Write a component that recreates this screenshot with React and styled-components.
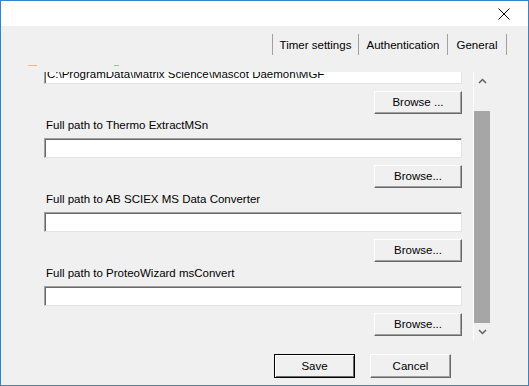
import React from 'react';
import styled, { createGlobalStyle } from 'styled-components';

const GlobalStyle = createGlobalStyle`
  html, body {
    margin: 0;
    padding: 0;
    background: #ffffff;
  }
  body {
    font-family: "Liberation Sans", Arial, sans-serif;
    font-size: 11px;
    color: #000000;
  }
`;

const tabs = [
  { label: 'Timer settings', width: 86 },
  { label: 'Authentication', width: 89 },
  { label: 'General', width: 59 },
];

const fields = [
  { label: 'Full path to Thermo ExtractMSn', button: 'Browse...' },
  { label: 'Full path to AB SCIEX MS Data Converter', button: 'Browse...' },
  { label: 'Full path to ProteoWizard msConvert', button: 'Browse...' },
];

export default function App() {
  return (
    <>
      <GlobalStyle />
      <Window>
        <TitleBar>
          <CloseButton>
            <svg width="12" height="12" viewBox="0 0 12 12">
              <path d="M0.5 0.5 L11.5 11.5 M11.5 0.5 L0.5 11.5" stroke="#000" strokeWidth="1" />
            </svg>
          </CloseButton>
        </TitleBar>
        <Body>
          <TabBar>
            <Separator />
            {tabs.map((t) => (
              <React.Fragment key={t.label}>
                <Tab $width={t.width}>{t.label}</Tab>
                <Separator />
              </React.Fragment>
            ))}
          </TabBar>
          <Marks>
            <Mark $color="#f0b98a" $width={9} />
            <Mark $color="#8fcb8f" $width={5} $gap={77} />
          </Marks>
          <ScrollPanel>
            <Viewport>
              <Content>
                <Input value="C:\ProgramData\Matrix Science\Mascot Daemon\MGF" readOnly />
                <ButtonRow>
                  <Button>Browse ...</Button>
                </ButtonRow>
                {fields.map((f) => (
                  <Field key={f.label}>
                    <Label>{f.label}</Label>
                    <Input value="" readOnly />
                    <ButtonRow>
                      <Button>{f.button}</Button>
                    </ButtonRow>
                  </Field>
                ))}
              </Content>
            </Viewport>
            <ScrollBar>
              <Arrow>
                <svg width="9" height="6" viewBox="0 0 9 6">
                  <path d="M1 5 L4.5 1.5 L8 5" fill="none" stroke="#606060" strokeWidth="1.5" />
                </svg>
              </Arrow>
              <Track>
                <Thumb />
              </Track>
              <Arrow>
                <svg width="9" height="6" viewBox="0 0 9 6">
                  <path d="M1 1 L4.5 4.5 L8 1" fill="none" stroke="#606060" strokeWidth="1.5" />
                </svg>
              </Arrow>
            </ScrollBar>
          </ScrollPanel>
          <Footer>
            <Button $default $width={81} $height={24}>Save</Button>
            <Button $width={81} $height={24}>Cancel</Button>
          </Footer>
        </Body>
      </Window>
    </>
  );
}

const Window = styled.div`
  width: 529px;
  height: 386px;
  box-sizing: border-box;
  border: 1px solid #3484cc;
  display: flex;
  flex-direction: column;
  background: #f0f0f0;
`;

const TitleBar = styled.div`
  height: 25px;
  background: #ffffff;
  display: flex;
  justify-content: flex-end;
  align-items: center;
`;

const CloseButton = styled.div`
  width: 46px;
  height: 25px;
  display: flex;
  align-items: center;
  justify-content: center;
  margin-right: 1px;
`;

const Body = styled.div`
  flex: 1;
  display: flex;
  flex-direction: column;
  background: #f0f0f0;
`;

const TabBar = styled.div`
  margin-top: 8px;
  height: 21px;
  display: flex;
  justify-content: flex-end;
  align-items: stretch;
  padding-right: 21px;
`;

const Separator = styled.div`
  width: 1px;
  background: #a0a0a0;
`;

const Tab = styled.div`
  width: ${(p) => p.$width - 1}px;
  display: flex;
  align-items: center;
  justify-content: center;
  font-size: 11.5px;
  white-space: nowrap;
  padding-top: 1px;
`;

const Marks = styled.div`
  margin-top: 10px;
  height: 1px;
  display: flex;
  padding-left: 27px;
`;

const Mark = styled.div`
  width: ${(p) => p.$width}px;
  height: 1px;
  background: ${(p) => p.$color};
  margin-left: ${(p) => p.$gap || 0}px;
`;

const ScrollPanel = styled.div`
  margin-top: 6px;
  height: 268px;
  display: flex;
`;

const Viewport = styled.div`
  width: 472px;
  overflow: hidden;
`;

const Content = styled.div`
  margin-top: -8px;
  padding-left: 43px;
  width: 418px;
`;

const Field = styled.div`
  display: flex;
  flex-direction: column;
  margin-top: 4px;
`;

const Label = styled.div`
  height: 14px;
  line-height: 14px;
  padding-left: 2px;
  margin-bottom: 6px;
  white-space: nowrap;
  font-size: 11.5px;
`;

const Input = styled.input`
  display: block;
  width: 418px;
  height: 20px;
  box-sizing: border-box;
  margin: 0;
  padding: 0 2px 1px;
  font-family: "Liberation Sans", Arial, sans-serif;
  font-size: 11.5px;
  color: #000;
  background: #ffffff;
  border-style: solid;
  border-width: 1px;
  border-color: #a0a0a0 #e3e3e3 #e3e3e3 #a0a0a0;
  box-shadow: inset 1px 1px 0 #696969;
  outline: none;
`;

const ButtonRow = styled.div`
  display: flex;
  justify-content: flex-end;
  margin-top: 7px;
`;

const Button = styled.button`
  width: ${(p) => p.$width || 88}px;
  height: ${(p) => p.$height || 23}px;
  box-sizing: border-box;
  margin: 0;
  padding: 0 0 1px;
  font-family: "Liberation Sans", Arial, sans-serif;
  font-size: 11.5px;
  color: #000;
  background: #f0f0f0;
  border-style: solid;
  border-width: 1px;
  border-color: ${(p) => (p.$default ? '#000000' : '#ffffff #696969 #696969 #ffffff')};
  box-shadow: ${(p) =>
    p.$default
      ? 'inset 1px 1px 0 #ffffff, inset -1px -1px 0 #696969'
      : 'inset -1px -1px 0 #a0a0a0'};
`;

const ScrollBar = styled.div`
  width: 16px;
  border-left: 1px solid #ffffff;
  display: flex;
  flex-direction: column;
  background: #f0f0f0;
`;

const Arrow = styled.div`
  height: 17px;
  display: flex;
  align-items: center;
  justify-content: center;
`;

const Track = styled.div`
  flex: 1;
  display: flex;
  flex-direction: column;
  justify-content: flex-end;
`;

const Thumb = styled.div`
  height: 212px;
  background: #a6a6a6;
`;

const Footer = styled.div`
  margin-top: 14px;
  display: flex;
  justify-content: flex-end;
  gap: 15px;
  padding-right: 77px;
`;
